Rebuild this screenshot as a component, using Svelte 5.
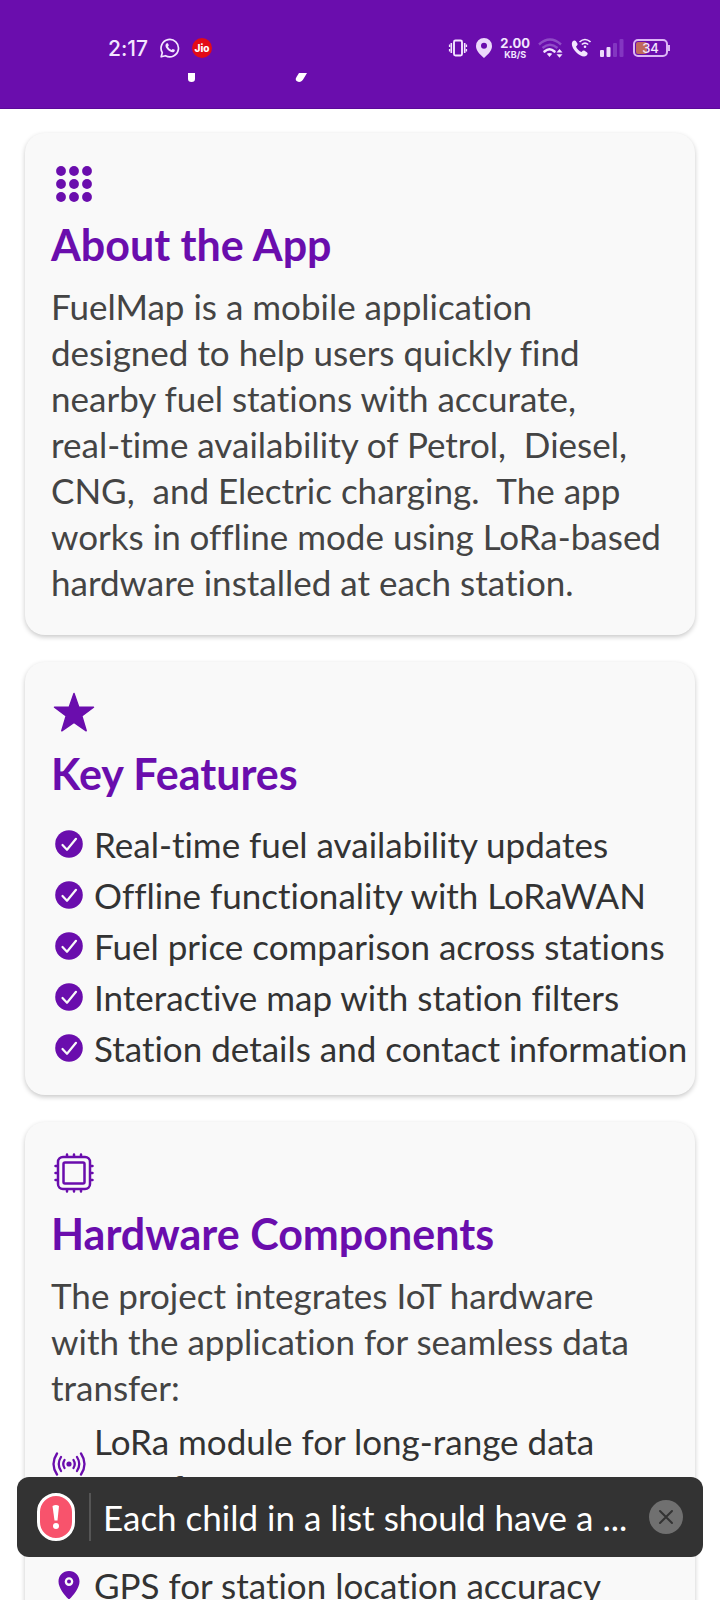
<script>
  const features = [
    'Real-time fuel availability updates',
    'Offline functionality with LoRaWAN',
    'Fuel price comparison across stations',
    'Interactive map with station filters',
    'Station details and contact information',
  ];
  const dots = [8, 21, 34];
  const pins = [15, 22, 29];
  let toastOpen = $state(true);
</script>

<div class="screen">
  <header>
    <div class="status">
      <div class="group">
        <span class="time">2:17</span>
        <svg width="20" height="20" viewBox="0 0 20 20" aria-label="WhatsApp">
          <path d="M1.2 18.8 2.3 14.6A8.7 8.7 0 1 1 5.5 17.7Z" fill="none" stroke="#f3e6ff" stroke-width="1.7" stroke-linejoin="round" />
          <path d="M6.8 5.3c.5-.3 1-.2 1.2.3l.8 1.7c.1.4-.7 1.1-.8 1.4.8 1.5 1.9 2.5 3.5 3.2.4-.2.9-1.1 1.3-1l1.9.9c.4.4 0 1.700-.8 2.200C10.900 15.600 5 10.200 5.500 7.300c.1-.9.600-1.600 1.300-2Z" fill="#f3e6ff" />
        </svg>
        <span class="jio">Jio</span>
      </div>
      <div class="group right">
        <svg width="20" height="20" viewBox="0 0 20 20" aria-label="Vibrate">
          <rect x="6" y="2.500" width="8" height="15" rx="1.500" fill="none" stroke="#f3e6ff" stroke-width="1.900" />
          <path d="M3.300 5v10M16.700 5v10" stroke="#f3e6ff" stroke-width="1.600" />
          <path d="M1.600 6.500v2.500M1.600 11v2.500M18.400 6.500v2.500M18.400 11v2.500" stroke="#f3e6ff" stroke-width="1.400" />
        </svg>
        <svg width="16" height="20" viewBox="0 0 16 20" aria-label="Location">
          <path fill-rule="evenodd" d="M8 0a8 8 0 0 1 8 8c0 4.500-3.500 8-8 12C3.500 16 0 12.500 0 8a8 8 0 0 1 8-8Zm0 4.800a3 3 0 1 0 0 6 3 3 0 0 0 0-6Z" fill="#ecd9fb" />
        </svg>
        <span class="speed"><b>2.00</b><small>KB/S</small></span>
        <svg width="25" height="20" viewBox="0 0 25 20" aria-label="Wi-Fi">
          <path d="M1 6.500Q12 -3.500 23 6.500M4.500 10Q12 3.500 19.500 10" fill="none" stroke="#8f4bc6" stroke-width="2.400" />
          <path d="M6.500 13.500q5-4.500 10 0" fill="none" stroke="#f3e6ff" stroke-width="2.600" stroke-linecap="round" />
          <path d="M8.800 15.800q2.700-1.800 5.400 0L11.500 19Z" fill="#f3e6ff" />
          <path d="m18.500 14.500 3-3.500 3 3.500zM18.500 16.200l3 3.500 3-3.500z" fill="#f3e6ff" />
        </svg>
        <svg width="20" height="20" viewBox="0 0 20 20" aria-label="Wi-Fi calling">
          <path d="M1.500 3.500c1-1.200 2.500-1.500 3.300-.5l1.600 2.600c.5 1-.1 2-1.400 2.900.7 2.300 3.200 4.700 5.600 5.500.9-1.300 2-1.700 3-1.200l2.500 1.600c.9.800.5 2.400-.8 3.400C10.500 21.500-2.200 9.500 1.500 3.500Z" fill="#f3e6ff" />
          <path d="M8.500 4Q14 -1 19.500 4M10.800 6.500q3.200-2.800 6.400 0" fill="none" stroke="#f3e6ff" stroke-width="1.600" />
          <circle cx="14" cy="8.700" r="1.300" fill="#f3e6ff" />
        </svg>
        <svg width="26" height="20" viewBox="0 0 26 20" aria-label="Signal">
          <rect x="1" y="12" width="4" height="7" rx="1" fill="#ecd9fb" />
          <rect x="7.500" y="9" width="4" height="10" rx="1" fill="#ecd9fb" />
          <rect x="14" y="5" width="4" height="14" rx="1" fill="#8336c1" />
          <rect x="20.500" y="1" width="4" height="18" rx="1" fill="#8336c1" />
        </svg>
        <span class="battery"><i></i><b>34</b></span>
      </div>
    </div>
    <svg class="peek" width="120" height="10" viewBox="0 0 120 10" aria-hidden="true">
      <path d="M0 0h7v6q0 3-3.500 3T0 6Z" fill="#fff" />
      <path d="M111 0h8l-3 5q-2 4-5 4-5-1-2.500-5Z" fill="#fff" />
    </svg>
  </header>

  <main>
    <section class="card">
      <svg class="icon" width="42" height="42" viewBox="0 0 42 42" aria-hidden="true">
        {#each dots as y}
          {#each dots as x}
            <circle cx={x} cy={y} r="4.900" fill="#6a0dad" />
          {/each}
        {/each}
      </svg>
      <h2>About the App</h2>
      <p>
        FuelMap is a mobile application<br />designed to help users quickly find<br />nearby fuel stations with accurate,<br />real-time availability of Petrol,&nbsp; Diesel,<br />CNG,&nbsp; and Electric charging.&nbsp; The app<br />works in offline mode using LoRa-based<br />hardware installed at each station.
      </p>
    </section>

    <section class="card">
      <svg class="icon" width="42" height="42" viewBox="0 0 42 42" aria-hidden="true">
        <path d="M21 1.500 25.800 15.200H40.500L28.800 23.900 33.200 38.800 21 30.300 8.800 38.800 13.200 23.900 1.500 15.200H16.200Z" fill="#6a0dad" stroke="#6a0dad" stroke-width="1.500" stroke-linejoin="round" />
      </svg>
      <h2>Key Features</h2>
      <ul class="features">
        {#each features as feature}
          <li>
            <svg width="34" height="28" viewBox="0 0 34 28" aria-hidden="true">
              <circle cx="17" cy="14" r="13.800" fill="#6a0dad" />
              <path d="m10.500 15 4.500 4.800 9-11" fill="none" stroke="#f9f9f9" stroke-width="2.200" stroke-linecap="round" stroke-linejoin="round" />
            </svg>
            <span>{feature}</span>
          </li>
        {/each}
      </ul>
    </section>

    <section class="card">
      <svg class="icon" width="42" height="42" viewBox="0 0 42 42" aria-hidden="true">
        <g fill="none" stroke="#6a0dad" stroke-width="2.500" stroke-linecap="round">
          <rect x="5" y="5" width="32" height="32" rx="5" />
          <rect x="10.500" y="10.500" width="21" height="21" rx="1.500" />
          {#each pins as p}
            <path d="M{p - 1} 2.500v2M{p - 1} 37.500v2M2.500 {p - 1}h2M37.500 {p - 1}h2" />
          {/each}
        </g>
      </svg>
      <h2>Hardware Components</h2>
      <p>
        The project integrates IoT hardware<br />with the application for seamless data<br />transfer:
      </p>
      <ul class="hardware">
        <li>
          <svg width="34" height="28" viewBox="0 0 34 28" aria-hidden="true">
            <circle cx="17" cy="14" r="2.600" fill="#6a0dad" />
            <path d="M12.500 10q-2.500 4 0 8M21.500 10q2.500 4 0 8M9 7q-4.500 7 0 14M25 7q4.500 7 0 14M5 3.500q-7 10.500 0 21M29 3.500q7 10.500 0 21" fill="none" stroke="#6a0dad" stroke-width="2.300" stroke-linecap="round" />
          </svg>
          <span>LoRa module for long-range data<br />transfer</span>
        </li>
        <li>
          <svg width="34" height="28" viewBox="0 0 34 28" aria-hidden="true">
            <path fill-rule="evenodd" d="M17 0c6 0 10.500 4.500 10.500 10.500C27.500 17 21 25 17 28.500 13 25 6.500 17 6.500 10.500 6.500 4.500 11 0 17 0Zm0 6.300a4.300 4.300 0 1 0 0 8.600 4.300 4.300 0 0 0 0-8.600Z" fill="#6a0dad" />
            <circle cx="17" cy="10.600" r="2" fill="#6a0dad" />
          </svg>
          <span>GPS for station location accuracy</span>
        </li>
      </ul>
    </section>
  </main>

  {#if toastOpen}
    <div class="toast" role="alert">
      <span class="badge">
        <svg width="10" height="26" viewBox="0 0 10 26" aria-hidden="true">
          <path d="M1.500 2Q5 0 8 2L6.500 16.500H3.500Z" fill="#fff" />
          <circle cx="5" cy="22" r="3" fill="#fff" />
        </svg>
      </span>
      <span class="rule"></span>
      <span class="message">Each child in a list should have a ...</span>
      <button aria-label="Dismiss" onclick={() => (toastOpen = false)}>
        <svg width="34" height="34" viewBox="0 0 34 34" aria-hidden="true">
          <path d="m11 11 12 12M23 11 11 23" stroke="#333" stroke-width="2" stroke-linecap="round" />
        </svg>
      </button>
    </div>
  {/if}
</div>

<style>
  :global(body) {
    margin: 0;
    background: #fff;
  }
  .screen {
    height: 100vh;
    display: flex;
    flex-direction: column;
    overflow: hidden;
    font-family: Lato, 'Open Sans', sans-serif;
    font-variant-ligatures: none;
  }
  header {
    flex: none;
    box-sizing: border-box;
    padding: 36px 48px 25px 108px;
    background: #6a0dad;
    color: #f3e6ff;
    border-bottom: 1px solid #5a0a98;
  }
  .status {
    display: flex;
    justify-content: space-between;
    align-items: center;
    height: 24px;
    font-family: Inter, sans-serif;
  }
  .group {
    display: flex;
    align-items: center;
    gap: 10px;
  }
  .group:first-child {
    gap: 12px;
  }
  .right {
    gap: 8px;
  }
  .time {
    font-size: 21px;
    font-weight: 500;
  }
  .jio {
    width: 20px;
    height: 20px;
    border-radius: 50%;
    background: #e30b17;
    color: #fff;
    font-size: 10px;
    font-weight: 800;
    line-height: 20px;
    text-align: center;
  }
  .speed {
    display: flex;
    flex-direction: column;
    align-items: center;
  }
  .speed b {
    font-size: 13px;
    font-weight: 700;
    line-height: 13px;
  }
  .speed small {
    font-size: 9px;
    font-weight: 700;
    line-height: 9px;
  }
  .battery {
    position: relative;
    box-sizing: border-box;
    width: 35px;
    height: 18px;
    margin-right: 4px;
    border: 2px solid #dcb6f5;
    border-radius: 5px;
    line-height: 14px;
    text-align: center;
  }
  .battery::after {
    content: '';
    position: absolute;
    top: 4px;
    right: -4px;
    width: 2px;
    height: 6px;
    background: #dcb6f5;
  }
  .battery i {
    position: absolute;
    left: 1px;
    top: 1px;
    width: 11px;
    height: 12px;
    border-radius: 2px;
    background: #c0695c;
  }
  .battery b {
    position: relative;
    display: block;
    font-size: 13px;
    font-weight: 500;
  }
  .peek {
    display: block;
    margin: 13px 0 0 80px;
  }
  main {
    flex: 1;
    min-height: 0;
    overflow: hidden;
    padding: 24px 25px 0;
    display: flex;
    flex-direction: column;
    gap: 27px;
  }
  .card {
    flex: none;
    padding: 30px 26px;
    border-radius: 20px;
    background: #f9f9f9;
    box-shadow: 0 2px 5px rgba(0, 0, 0, 0.22);
  }
  .icon {
    display: block;
    margin-left: 2px;
  }
  h2 {
    margin: 12px 0 10px;
    font-size: 43px;
    line-height: 56px;
    font-weight: 700;
    color: #6a0dad;
    white-space: nowrap;
  }
  p {
    margin: 0;
    font-size: 35px;
    line-height: 46px;
    color: #444;
    white-space: nowrap;
  }
  ul {
    list-style: none;
    margin: 0;
    padding: 0;
    display: flex;
    flex-direction: column;
    font-size: 35px;
    line-height: 46px;
    color: #333;
  }
  li {
    display: flex;
    align-items: center;
    gap: 8px;
    white-space: nowrap;
  }
  li svg {
    flex: none;
    margin-left: 1px;
  }
  .features {
    gap: 5px;
    margin-top: 19px;
    margin-bottom: -6px;
  }
  .hardware {
    gap: 52px;
    margin-top: 8px;
  }
  .toast {
    position: fixed;
    left: 17px;
    right: 17px;
    bottom: 43px;
    height: 80px;
    box-sizing: border-box;
    padding: 0 20px;
    display: flex;
    align-items: center;
    border-radius: 12px;
    background: #333;
    color: #fff;
    font-size: 35px;
  }
  .badge {
    flex: none;
    box-sizing: border-box;
    width: 38px;
    height: 48px;
    display: grid;
    place-items: center;
    border: 3px solid #fff;
    border-radius: 19px;
    background: #f8536c;
  }
  .rule {
    flex: none;
    width: 2px;
    height: 48px;
    margin: 0 12px 0 14px;
    background: #555;
  }
  .message {
    flex: 1;
    min-width: 0;
    overflow: hidden;
    white-space: nowrap;
    text-overflow: ellipsis;
  }
  button {
    flex: none;
    width: 34px;
    height: 34px;
    padding: 0;
    border: 0;
    border-radius: 50%;
    background: #707070;
  }
  button svg {
    display: block;
  }
</style>
